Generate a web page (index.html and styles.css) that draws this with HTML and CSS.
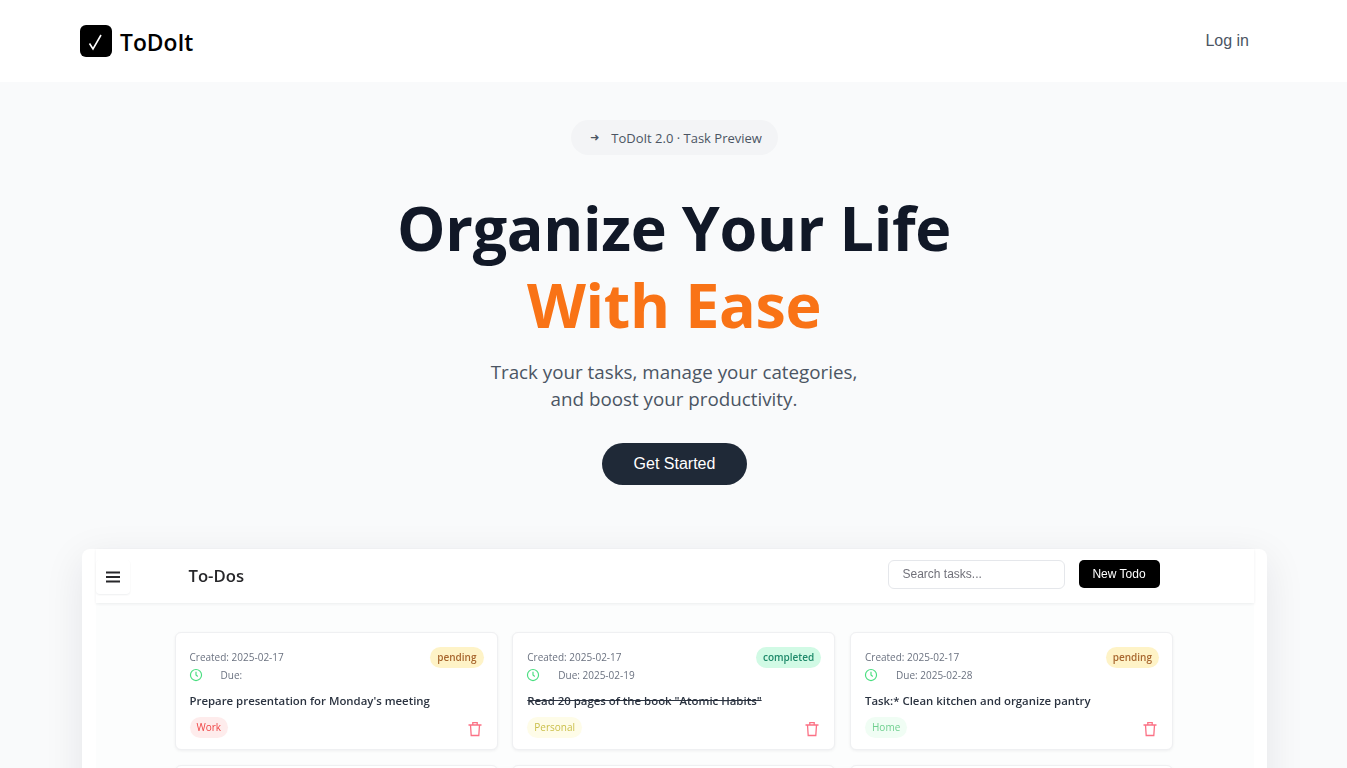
FILE: index.html
```html
<!DOCTYPE html>
<html>
  <head>
    <title>ToDoIt</title>
    <link rel="stylesheet" href="styles.css">
  </head>
  <body>
    <nav class="nav">
      <a class="brand" href="#">
        <span class="brand-icon">
          <svg width="32" height="32" viewBox="0 0 32 32"><path d="M9.500 18.500 13 24 21 10" stroke="#fff" stroke-width="1.600" fill="none"/></svg>
        </span>
        <span class="brand-name">ToDoIt</span>
      </a>
      <a class="login" href="#">Log in</a>
    </nav>

    <main class="hero">
      <div class="pill"><span class="pill-arrow">➜</span><span>ToDoIt 2.0 · Task Preview</span></div>
      <h1 class="title">Organize Your Life<br><span class="title-accent">With Ease</span></h1>
      <p class="lead">Track your tasks, manage your categories,<br>and boost your productivity.</p>
      <a class="cta" href="#">Get Started</a>

      <section class="preview">
        <div class="preview-inner">
          <header class="topbar">
            <button class="menu-btn">
              <svg width="16" height="12" viewBox="0 0 16 12"><path d="M1 1.500h14M1 6h14M1 10.500h14" stroke="#27272a" stroke-width="2" fill="none"/></svg>
            </button>
            <h2 class="topbar-title">To-Dos</h2>
            <input class="search" placeholder="Search tasks...">
            <button class="new-todo">New Todo</button>
          </header>

          <div class="cards">
            <article class="card">
              <div class="card-top">
                <div class="dates">
                  <div>Created: 2025-02-17</div>
                  <div class="due">
                    <svg class="clock" width="14" height="14" viewBox="0 0 24 24"><circle cx="12" cy="12" r="9.500"/><path d="M12 6.500V12l3 2.500"/></svg>
                    <span>Due:</span>
                  </div>
                </div>
                <span class="status status-pending">pending</span>
              </div>
              <p class="task">Prepare presentation for Monday's meeting</p>
              <div class="card-bottom">
                <span class="tag tag-work">Work</span>
                <svg class="trash" width="16" height="16" viewBox="0 0 16 16"><path d="M1.500 4h13M3.500 4l.7 10.500h7.600L12.500 4M5.800 4V1.700h4.400V4"/></svg>
              </div>
            </article>

            <article class="card">
              <div class="card-top">
                <div class="dates">
                  <div>Created: 2025-02-17</div>
                  <div class="due">
                    <svg class="clock" width="14" height="14" viewBox="0 0 24 24"><circle cx="12" cy="12" r="9.500"/><path d="M12 6.500V12l3 2.500"/></svg>
                    <span>Due: 2025-02-19</span>
                  </div>
                </div>
                <span class="status status-completed">completed</span>
              </div>
              <p class="task task-done">Read 20 pages of the book "Atomic Habits"</p>
              <div class="card-bottom">
                <span class="tag tag-personal">Personal</span>
                <svg class="trash" width="16" height="16" viewBox="0 0 16 16"><path d="M1.500 4h13M3.500 4l.7 10.500h7.600L12.500 4M5.800 4V1.700h4.400V4"/></svg>
              </div>
            </article>

            <article class="card">
              <div class="card-top">
                <div class="dates">
                  <div>Created: 2025-02-17</div>
                  <div class="due">
                    <svg class="clock" width="14" height="14" viewBox="0 0 24 24"><circle cx="12" cy="12" r="9.500"/><path d="M12 6.500V12l3 2.500"/></svg>
                    <span>Due: 2025-02-28</span>
                  </div>
                </div>
                <span class="status status-pending">pending</span>
              </div>
              <p class="task">Task:* Clean kitchen and organize pantry</p>
              <div class="card-bottom">
                <span class="tag tag-home">Home</span>
                <svg class="trash" width="16" height="16" viewBox="0 0 16 16"><path d="M1.500 4h13M3.500 4l.7 10.500h7.600L12.500 4M5.800 4V1.700h4.400V4"/></svg>
              </div>
            </article>

            <article class="card"></article>
            <article class="card"></article>
            <article class="card"></article>
          </div>
        </div>
      </section>
    </main>
  </body>
</html>
```

FILE: styles.css
```css
html,
body {
  height: 768px;
  overflow: hidden;
}

body {
  margin: 0;
  background: #f9fafb;
  font-family: "Open Sans", "Noto Sans", sans-serif;
}

.nav {
  height: 82px;
  background: #fff;
  display: flex;
  align-items: center;
  justify-content: space-between;
  padding: 0 98px 0 80px;
}

.brand {
  display: flex;
  align-items: center;
  gap: 8px;
  color: #000;
  text-decoration: none;
}

.brand-icon {
  width: 32px;
  height: 32px;
  background: #000;
  border-radius: 6px;
  display: flex;
}

.brand-name {
  font-size: 22.800px;
  font-weight: 600;
  margin-top: 2px;
}

.login {
  font-family: "Liberation Sans", Arial, sans-serif;
  font-size: 16px;
  color: #4b5563;
  text-decoration: none;
}

.hero {
  display: flex;
  flex-direction: column;
  align-items: center;
  padding: 38px 0 0 2px;
}

.pill {
  height: 35px;
  width: 207px;
  box-sizing: border-box;
  padding-left: 19px;
  background: #f3f4f6;
  border-radius: 18px;
  display: flex;
  align-items: center;
  gap: 12px;
  font-size: 13px;
  color: #4b5563;
}

.pill-arrow {
  font-family: "DejaVu Sans", sans-serif;
  font-size: 11px;
  color: #4b5563;
}

.title {
  margin: 34px 0 0 -1px;
  font-size: 61px;
  line-height: 77px;
  font-weight: 700;
  letter-spacing: -0.350px;
  color: #111827;
  text-align: center;
}

.title-accent {
  color: #f97316;
}

.lead {
  margin: 16px 0 0 -1px;
  font-size: 18.800px;
  line-height: 27px;
  color: #4b5563;
  text-align: center;
}

.cta {
  margin-top: 30px;
  width: 145px;
  height: 42px;
  border-radius: 21px;
  background: #1f2937;
  color: #fff;
  font-family: "Liberation Sans", Arial, sans-serif;
  font-size: 16px;
  display: flex;
  align-items: center;
  justify-content: center;
  text-decoration: none;
}

.preview {
  margin-top: 64px;
  width: 1185px;
  height: 400px;
  margin-left: -1px;
  background: #fff;
  border-radius: 8px 8px 0 0;
  box-shadow: 0 10px 40px rgba(17, 24, 39, 0.09);
  box-sizing: border-box;
  padding-left: 14px;
}

.preview-inner {
  filter: blur(0.5px);
  background: #fcfdfd;
  width: 1158px;
  height: 100%;
}

.topbar {
  height: 54px;
  background: #fff;
  box-shadow: 0 1px 3px rgba(17, 24, 39, 0.07);
  display: flex;
  align-items: center;
}

.menu-btn {
  width: 34px;
  height: 34px;
  margin-top: 1px;
  padding: 0;
  border: 0;
  background: #fff;
  border-radius: 4px;
  box-shadow: 0 1px 2px rgba(17, 24, 39, 0.07);
  display: flex;
  align-items: center;
  justify-content: center;
}

.topbar-title {
  margin: -2px 0 0 59px;
  font-size: 16.700px;
  font-weight: 600;
  color: #27272a;
  flex: 1;
}

.search {
  width: 177px;
  height: 29px;
  box-sizing: border-box;
  margin-top: -4px;
  padding: 0 14px;
  border: 1px solid #e5e7eb;
  border-radius: 6px;
  background: #fff;
  font-family: "Liberation Sans", Arial, sans-serif;
  font-size: 12px;
}

.search::placeholder {
  color: #71717a;
}

.new-todo {
  width: 81px;
  height: 28px;
  margin: -5px 94px 0 14px;
  border: 0;
  border-radius: 5px;
  background: #000;
  color: #fff;
  font-family: "Liberation Sans", Arial, sans-serif;
  font-size: 12px;
}

.cards {
  margin: 29px 0 0 79px;
  display: grid;
  grid-template-columns: repeat(3, 323px);
  grid-auto-rows: 118px;
  gap: 15px 14.750px;
}

.card {
  background: #fff;
  border: 1px solid #eff0f2;
  border-radius: 6px;
  box-shadow: 0 1px 3px rgba(17, 24, 39, 0.06);
  box-sizing: border-box;
  padding: 14px 13px 0 14px;
}

.card-top {
  display: flex;
  justify-content: space-between;
  align-items: flex-start;
}

.dates {
  font-size: 10px;
  line-height: 18px;
  color: #6b7280;
  padding-top: 1px;
}

.due {
  display: flex;
  align-items: center;
  gap: 18px;
}

.clock {
  fill: none;
  stroke: #4ade80;
  stroke-width: 2;
  margin-left: -1px;
}

.status {
  font-size: 10px;
  font-weight: 600;
  line-height: 21px;
  padding: 0 7px;
  border-radius: 11px;
}

.status-pending {
  background: #fef3c7;
  color: #a8672f;
}

.status-completed {
  background: #d1fae5;
  color: #1f8a6b;
}

.task {
  margin: 9px 0 0;
  font-size: 11.400px;
  line-height: 16px;
  font-weight: 600;
  color: #2b3340;
}

.task-done {
  text-decoration: line-through;
}

.card-bottom {
  margin-top: 8px;
  display: flex;
  justify-content: space-between;
  align-items: center;
}

.tag {
  font-size: 10px;
  line-height: 21px;
  padding: 0 7px;
  border-radius: 11px;
}

.tag-work {
  background: #feecec;
  color: #ef4444;
}

.tag-personal {
  background: #fefce8;
  color: #cabf4a;
}

.tag-home {
  background: #f0fdf4;
  color: #6fcf8f;
}

.trash {
  fill: none;
  stroke: #fb7185;
  stroke-width: 1.300;
  margin: 2px 1px 0 0;
}
```
